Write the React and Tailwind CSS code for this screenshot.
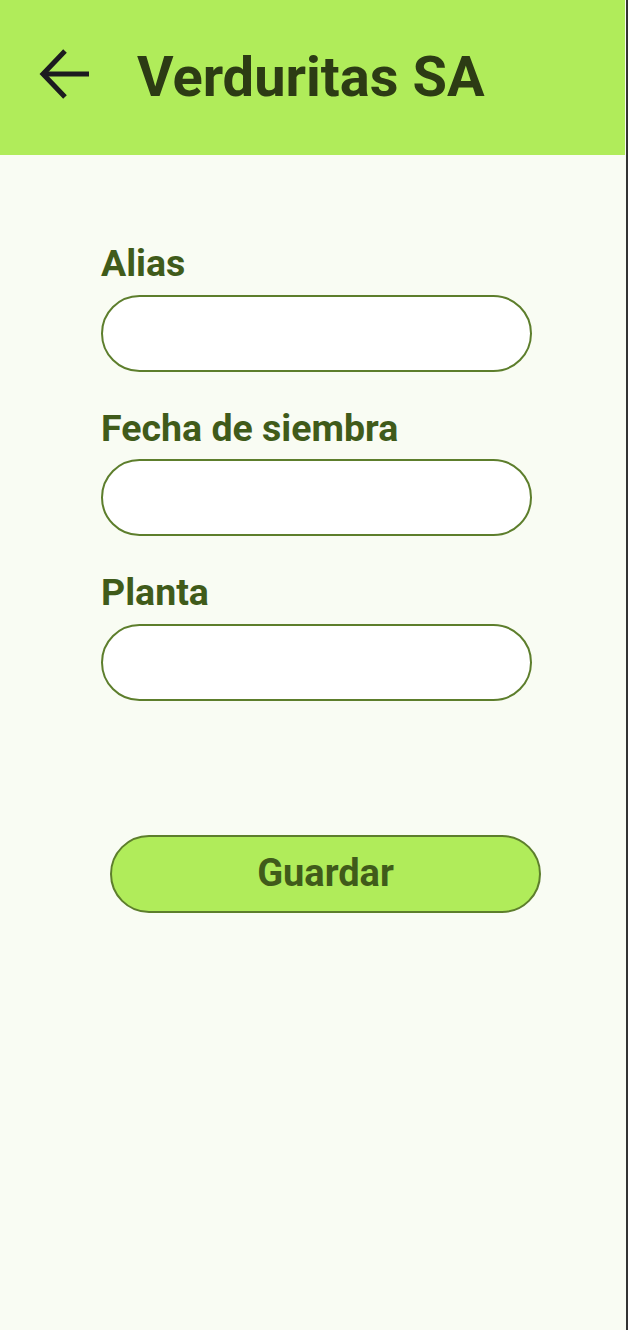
import React from 'react';

const Field = ({ label }) => (
  <div className="flex flex-col">
    <label className="text-[37.5px] font-bold leading-none text-[#405b1a]">{label}</label>
    <input className="mt-[12px] h-[77px] w-[431px] rounded-full border-2 border-[#5d7e2c] bg-white px-6 outline-none" />
  </div>
);

export default function App() {
  return (
    <div className="flex min-h-[1330px] w-[628px] font-['Roboto',sans-serif]">
      <div className="flex w-[626px] flex-col bg-[#f9fcf3]">
        <header className="flex h-[155px] w-[625px] items-start bg-[#b0ec5a]">
          <button className="ml-[39px] mt-[48px] shrink-0 text-[#1c1b1f]">
            <svg width="52" height="52" viewBox="0 0 52 52" fill="none" stroke="currentColor" strokeWidth="5">
              <path d="M50 26H5" />
              <path d="M26 3L4 26l22 23" />
            </svg>
          </button>
          <h1 className="ml-[46px] mt-[49px] text-[56px] font-bold leading-none text-[#2c3b14]">Verduritas SA</h1>
        </header>

        <div className="flex flex-col gap-[38px] pl-[101px] pt-[90px]">
          <Field label="Alias" />
          <Field label="Fecha de siembra" />
          <Field label="Planta" />
        </div>

        <div className="pl-[110px] pt-[134px]">
          <button className="h-[78px] w-[431px] rounded-full border-2 border-[#5d7e2c] bg-[#b0ec5a] text-[38px] font-bold text-[#405b1a]">
            Guardar
          </button>
        </div>
      </div>
      <div className="w-[2px] bg-[#333]" />
    </div>
  );
}
